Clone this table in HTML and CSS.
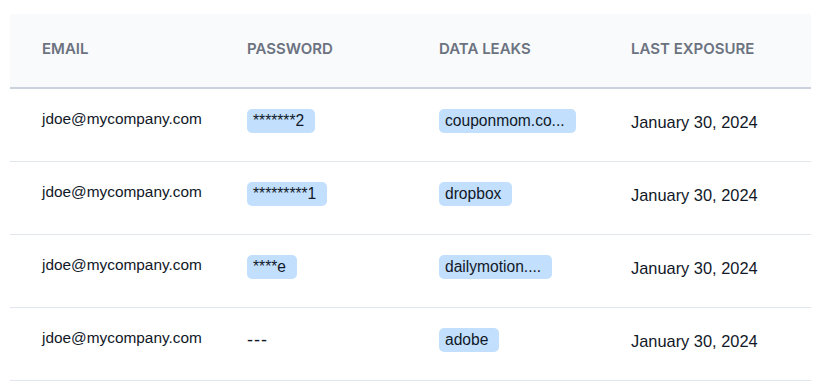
FILE: index.html
```html
<!DOCTYPE html>
<html>
<head>
  <meta charset="utf-8">
  <title>Exposed credentials</title>
  <link rel="stylesheet" href="styles.css">
</head>
<body>
  <table class="leaks">
    <colgroup>
      <col class="col-email">
      <col class="col-password">
      <col class="col-leaks">
      <col class="col-date">
    </colgroup>
    <thead>
      <tr>
        <th>Email</th>
        <th>Password</th>
        <th>Data leaks</th>
        <th>Last exposure</th>
      </tr>
    </thead>
    <tbody>
      <tr>
        <td class="email">jdoe@mycompany.com</td>
        <td><span class="pill">*******2</span></td>
        <td><span class="pill">couponmom.co...</span></td>
        <td class="date">January 30, 2024</td>
      </tr>
      <tr>
        <td class="email">jdoe@mycompany.com</td>
        <td><span class="pill">*********1</span></td>
        <td><span class="pill">dropbox</span></td>
        <td class="date">January 30, 2024</td>
      </tr>
      <tr>
        <td class="email">jdoe@mycompany.com</td>
        <td><span class="pill">****e</span></td>
        <td><span class="pill">dailymotion....</span></td>
        <td class="date">January 30, 2024</td>
      </tr>
      <tr>
        <td class="email">jdoe@mycompany.com</td>
        <td><span class="empty">---</span></td>
        <td><span class="pill">adobe</span></td>
        <td class="date">January 30, 2024</td>
      </tr>
    </tbody>
  </table>
</body>
</html>
```

FILE: styles.css
```css
body {
  margin: 0;
  padding: 14px 9px 0 10px;
  background: #fff;
  font-family: "Liberation Sans", Arial, sans-serif;
  color: #111827;
}

.leaks {
  width: 801px;
  border-collapse: collapse;
  table-layout: fixed;
}

.col-email { width: 205px; }
.col-password { width: 192px; }
.col-leaks { width: 192px; }
.col-date { width: 212px; }

/* header */
.leaks thead tr {
  background: #f9fafb;
  border-bottom: 2px solid #cbd2de;
}

.leaks th {
  padding: 27px 32px 30px;
  height: 16px;
  line-height: 16px;
  text-align: left;
  font-family: Inter, "Noto Sans", sans-serif;
  font-size: 15px;
  font-weight: 600;
  text-transform: uppercase;
  color: #6b7280;
}

/* rows */
.leaks tbody tr {
  border-bottom: 1px solid #e2e6ee;
}

.leaks td {
  padding: 20px 32px 0;
  height: 52px;
  vertical-align: top;
  font-size: 15.4px;
  line-height: 20px;
}

.leaks td.date {
  font-size: 16.4px;
  line-height: 26px;
}

.pill {
  display: inline-block;
  height: 24px;
  line-height: 24px;
  padding: 0 11px 0 6px;
  border-radius: 5px;
  background: #c2e0fe;
  font-size: 15.6px;
  white-space: nowrap;
}

.empty {
  display: inline-block;
  line-height: 24px;
  font-size: 18px;
  letter-spacing: 1px;
}
```
